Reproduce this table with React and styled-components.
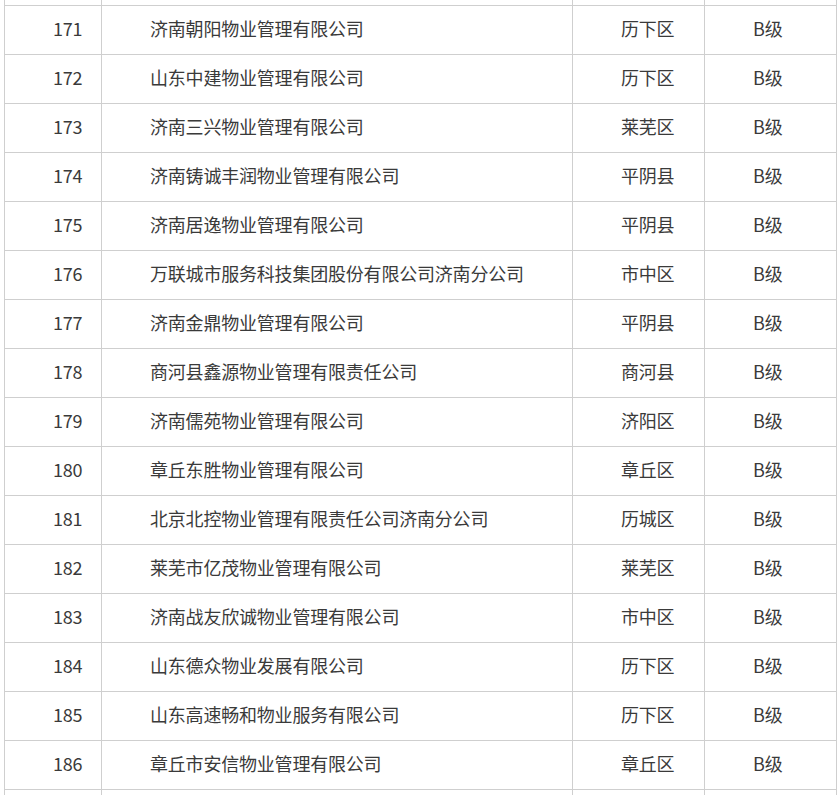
import React from "react";
import styled, { createGlobalStyle } from "styled-components";

const Global = createGlobalStyle`
  html, body { margin: 0; padding: 0; background: #fff; }
  body { font-family: "Noto Sans CJK SC", "Liberation Sans", sans-serif; color: #333; overflow: hidden; }
`;

const Page = styled.div`
  padding-left: 4px;
  height: 795px;
  overflow: hidden;
`;

const Table = styled.div`
  display: grid;
  grid-template-columns: 97px 471px 132px 132px;
  width: 833px;
  border-left: 1px solid #cfcfcf;
  box-sizing: border-box;
`;

const Cell = styled.div`
  box-sizing: border-box;
  height: ${(p) => (p.$h ? p.$h : 49)}px;
  border-right: 1px solid #cfcfcf;
  border-bottom: 1px solid #cfcfcf;
  padding-left: 48px;
  padding-bottom: 4px;
  display: flex;
  align-items: center;
  font-size: 18px;
  line-height: 24px;
  letter-spacing: -0.2px;
  white-space: nowrap;
  color: #3a3a3a;
`;

const rows = [
  [171, "济南朝阳物业管理有限公司", "历下区", "B级"],
  [172, "山东中建物业管理有限公司", "历下区", "B级"],
  [173, "济南三兴物业管理有限公司", "莱芜区", "B级"],
  [174, "济南铸诚丰润物业管理有限公司", "平阴县", "B级"],
  [175, "济南居逸物业管理有限公司", "平阴县", "B级"],
  [176, "万联城市服务科技集团股份有限公司济南分公司", "市中区", "B级"],
  [177, "济南金鼎物业管理有限公司", "平阴县", "B级"],
  [178, "商河县鑫源物业管理有限责任公司", "商河县", "B级"],
  [179, "济南儒苑物业管理有限公司", "济阳区", "B级"],
  [180, "章丘东胜物业管理有限公司", "章丘区", "B级"],
  [181, "北京北控物业管理有限责任公司济南分公司", "历城区", "B级"],
  [182, "莱芜市亿茂物业管理有限公司", "莱芜区", "B级"],
  [183, "济南战友欣诚物业管理有限公司", "市中区", "B级"],
  [184, "山东德众物业发展有限公司", "历下区", "B级"],
  [185, "山东高速畅和物业服务有限公司", "历下区", "B级"],
  [186, "章丘市安信物业管理有限公司", "章丘区", "B级"],
];

export default function App() {
  return (
    <Page>
      <Global />
      <Table>
        {[0, 1, 2, 3].map((i) => (
          <Cell key={"top" + i} $h={6} />
        ))}
        {rows.map((r) =>
          r.map((v, i) => <Cell key={r[0] + "-" + i}>{v}</Cell>)
        )}
        {[0, 1, 2, 3].map((i) => (
          <Cell key={"bot" + i} />
        ))}
      </Table>
    </Page>
  );
}
